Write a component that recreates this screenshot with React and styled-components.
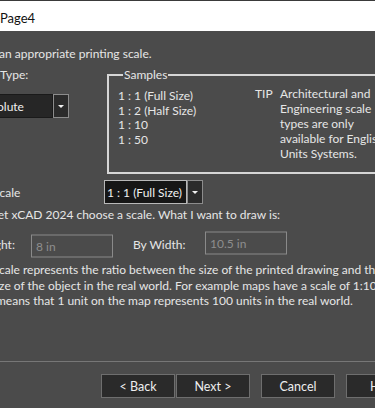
import React from 'react';
import styled, { createGlobalStyle } from 'styled-components';

const GlobalStyle = createGlobalStyle`
  html, body {
    margin: 0;
    padding: 0;
    background: #4b4b4b;
  }
  body {
    font-family: Lato, "Liberation Sans", sans-serif;
    font-size: 12px;
    color: #e6e6e6;
  }
`;

function App() {
  return (
    <>
      <GlobalStyle />
      <Window>
        <TitleBar>
          <Title>Page4</Title>
        </TitleBar>
        <Body>
          <Text $cut={-39}>Select an appropriate printing scale.</Text>
          <Middle>
            <TypeColumn>
              <Text $cut={-33}>Scale Type:</Text>
              <Combo $cut={-29}>
                <ComboField $width={79}>Absolute</ComboField>
                <ComboButton />
              </Combo>
            </TypeColumn>
            <Samples>
              <Legend>Samples</Legend>
              <SamplesInner>
                <SampleList>
                  <span>1 : 1 (Full Size)</span>
                  <span>1 : 2 (Half Size)</span>
                  <span>1 : 10</span>
                  <span>1 : 50</span>
                </SampleList>
                <Tip>
                  <TipLabel>TIP</TipLabel>
                  <TipText>
                    Architectural and
                    <br />
                    Engineering scale
                    <br />
                    types are only
                    <br />
                    available for English
                    <br />
                    Units Systems.
                  </TipText>
                </Tip>
              </SamplesInner>
            </Samples>
          </Middle>
          <ScaleRow>
            <RowLabel $cut={-10} $width={111}>Scale</RowLabel>
            <Combo $cut={0}>
              <ComboField $width={83} $light>1 : 1 (Full Size)</ComboField>
              <ComboButton />
            </Combo>
          </ScaleRow>
          <Text $cut={-11} $top={3}>Let xCAD 2024 choose a scale. What I want to draw is:</Text>
          <SizeRow>
            <RowLabel $cut={-43} $width={71}>By Height:</RowLabel>
            <Input $shift={1.5}>8 in</Input>
            <RowLabel $cut={20} $width={72}>By Width:</RowLabel>
            <Input $shift={-1.5}>10.5 in</Input>
          </SizeRow>
          <Paragraph>
            <Text $cut={-20}>A scale represents the ratio between the size of the printed drawing and the</Text>
            <Text $cut={-12}>size of the object in the real world. For example maps have a scale of 1:100</Text>
            <Text $cut={-7}>means that 1 unit on the map represents 100 units in the real world.</Text>
          </Paragraph>
        </Body>
        <Footer>
          <ButtonPair>
            <Button>&lt; Back</Button>
            <Button>Next &gt;</Button>
          </ButtonPair>
          <Button>Cancel</Button>
          <Button>Help</Button>
        </Footer>
      </Window>
    </>
  );
}

const Window = styled.div`
  width: 375px;
  height: 408px;
  overflow: hidden;
  display: flex;
  flex-direction: column;
  background: #4b4b4b;
`;

const TitleBar = styled.div`
  height: 30px;
  flex-shrink: 0;
  background: #ffffff;
  border-top: 1px solid #3a3a3a;
  display: flex;
  align-items: center;
`;

const Title = styled.span`
  font-size: 13px;
  color: #111;
  padding-top: 3px;
`;

const Body = styled.div`
  display: flex;
  flex-direction: column;
  padding: 15px 0 0 3px;
`;

const Text = styled.div`
  white-space: nowrap;
  line-height: 15px;
  margin-left: ${p => p.$cut}px;
  margin-top: ${p => p.$top || 0}px;
`;

const Middle = styled.div`
  display: flex;
  align-items: flex-start;
  margin-top: 6px;
`;

const TypeColumn = styled.div`
  width: 104px;
  flex-shrink: 0;
  display: flex;
  flex-direction: column;
  gap: 12px;
`;

const Combo = styled.div`
  display: flex;
  height: 24px;
  flex-shrink: 0;
  margin-left: ${p => p.$cut}px;
`;

const ComboField = styled.div`
  width: ${p => p.$width}px;
  box-sizing: border-box;
  background: ${p => (p.$light ? '#161616' : '#262626')};
  border: 1px solid ${p => (p.$light ? '#b8b8b8' : '#1a1a1a')};
  display: flex;
  align-items: center;
  padding-left: 2px;
  white-space: nowrap;
  overflow: hidden;
  color: #f0f0f0;
`;

const ComboButton = styled.div`
  width: 16px;
  box-sizing: border-box;
  background: #2b2b2b;
  border: 1px solid #8c8c8c;
  display: flex;
  align-items: center;
  justify-content: center;
  &::after {
    content: '';
    border-left: 3px solid transparent;
    border-right: 3px solid transparent;
    border-top: 3px solid #f0f0f0;
  }
`;

const Samples = styled.fieldset`
  margin: 0;
  padding: 3px 0 11px 9px;
  width: 300px;
  flex-shrink: 0;
  border: 2px solid #d6d6d6;
  min-width: 0;
`;

const Legend = styled.legend`
  padding: 0 1px;
  margin-left: 5px;
  line-height: 15px;
`;

const SamplesInner = styled.div`
  display: flex;
`;

const SampleList = styled.div`
  width: 137px;
  display: flex;
  flex-direction: column;
  line-height: 14.7px;
  padding-top: 4px;
`;

const Tip = styled.div`
  display: flex;
  line-height: 15px;
  padding-top: 1px;
`;

const TipLabel = styled.span`
  width: 25px;
`;

const TipText = styled.div`
  white-space: nowrap;
`;

const ScaleRow = styled.div`
  display: flex;
  align-items: center;
  margin-top: 6px;
  height: 24px;
`;

const SizeRow = styled.div`
  display: flex;
  align-items: center;
  margin-top: 9px;
  height: 26px;
`;

const RowLabel = styled.span`
  width: ${p => p.$width}px;
  flex-shrink: 0;
  margin-left: ${p => p.$cut}px;
  white-space: nowrap;
`;

const Input = styled.div`
  width: 82px;
  height: 23px;
  flex-shrink: 0;
  box-sizing: border-box;
  border: 1px solid #8a8a8a;
  color: #8e8e8e;
  padding-left: 4px;
  display: flex;
  align-items: center;
  transform: translateY(${p => p.$shift}px);
`;

const Paragraph = styled.div`
  margin-top: 5px;
  & > div {
    line-height: 15.5px;
  }
`;

const Footer = styled.div`
  margin-top: auto;
  height: 47px;
  flex-shrink: 0;
  box-sizing: border-box;
  border-top: 1px solid #777;
  display: flex;
  align-items: center;
  gap: 11px;
  padding: 2px 0 0 101px;
`;

const ButtonPair = styled.div`
  display: flex;
  gap: 1px;
`;

const Button = styled.div`
  width: 74px;
  height: 24px;
  flex-shrink: 0;
  box-sizing: border-box;
  background: #2a2a2a;
  border: 1px solid #6e6e6e;
  display: flex;
  align-items: center;
  justify-content: center;
  font-size: 12.5px;
  color: #eeeeee;
`;

export default App;
